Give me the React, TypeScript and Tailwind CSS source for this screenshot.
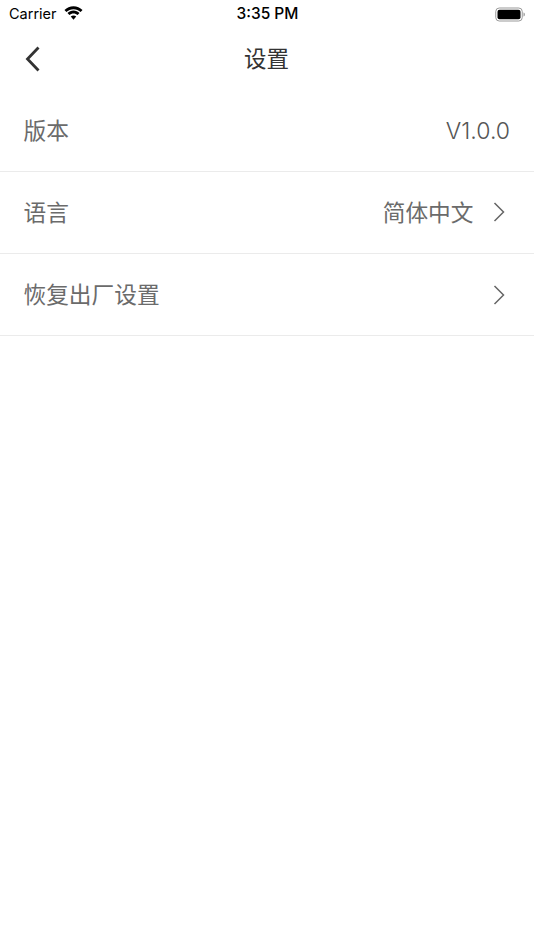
const sans = "font-['Inter','Noto_Sans_CJK_SC',sans-serif]";
const cjk = "font-['Noto_Sans_CJK_SC',sans-serif]";

function Chevron() {
  return (
    <svg width="12" height="20" viewBox="0 0 12 20" fill="none" className="ml-[19px] mr-[5.5px] shrink-0">
      <path d="M1.500 1 L10.500 10 L1.500 19" stroke="#666" strokeWidth="1.500" />
    </svg>
  );
}

function Row({ label, children }: { label: string; children?: React.ReactNode }) {
  return (
    <div className="flex h-[82px] items-center justify-between border-b-[1.5px] border-[#ebebeb] pl-[23.5px] pr-6">
      <span className={`${cjk} mb-[1px] text-[22.7px] text-[#6b6b6b]`}>{label}</span>
      <div className="flex items-center">{children}</div>
    </div>
  );
}

export default function App() {
  return (
    <div className={`${sans} h-[950px] w-[534px] bg-white`}>
      {/* status bar */}
      <div className="flex h-7 items-center justify-between pl-[9px] pr-2 text-black">
        <div className="flex w-[200px] items-center gap-[6px]">
          <span className="text-[14.5px]">Carrier</span>
          <svg width="21" height="15" viewBox="0 0 20 14" fill="#000" className="mb-[2px]">
            <path d="M10 2.900c2.600 0 5 1 6.800 2.700l1.800-2C16.300 1.400 13.300.1 10 .1S3.700 1.400 1.400 3.600l1.800 2C5 3.900 7.400 2.900 10 2.900z" />
            <path d="M10 7c1.500 0 2.800.6 3.900 1.500l1.800-2C14.200 5.100 12.200 4.200 10 4.200s-4.200.9-5.700 2.300l1.800 2C7.200 7.600 8.500 7 10 7z" />
            <path d="M10 8.800c-1 0-1.900.4-2.600 1L10 13l2.600-3.200c-.7-.6-1.600-1-2.600-1z" />
          </svg>
        </div>
        <span className="text-[15.5px] font-medium">3:35 PM</span>
        <div className="flex w-[200px] justify-end">
          <svg width="31" height="15" viewBox="0 0 31 15" fill="none">
            <rect x="0.75" y="1" width="26.500" height="13" rx="3.500" stroke="#999" strokeWidth="1" />
            <rect x="2.500" y="2.700" width="23" height="9.600" rx="2" fill="#000" />
            <path d="M28.500 5.500 v4 c.9-.3 1.400-1.100 1.400-2 s-.5-1.700-1.400-2z" fill="#999" />
          </svg>
        </div>
      </div>

      {/* nav bar */}
      <div className="relative flex h-[62px] items-center justify-center">
        <svg width="18" height="26" viewBox="0 0 18 26" fill="none" className="absolute left-6 top-[18px]">
          <path d="M14.500 1.500 L3.500 13 L14.500 24.500" stroke="#333" strokeWidth="2.800" />
        </svg>
        <span className={`${cjk} mb-[3px] mr-[1px] text-[22.5px] text-[#333]`}>设置</span>
      </div>

      <Row label="版本">
        <span className="mt-[1px] text-[23px] font-light text-[#555]">V1.0.0</span>
      </Row>
      <Row label="语言">
        <span className={`${cjk} mb-[1px] text-[22.7px] text-[#6b6b6b]`}>简体中文</span>
        <Chevron />
      </Row>
      <Row label="恢复出厂设置">
        <Chevron />
      </Row>
    </div>
  );
}
